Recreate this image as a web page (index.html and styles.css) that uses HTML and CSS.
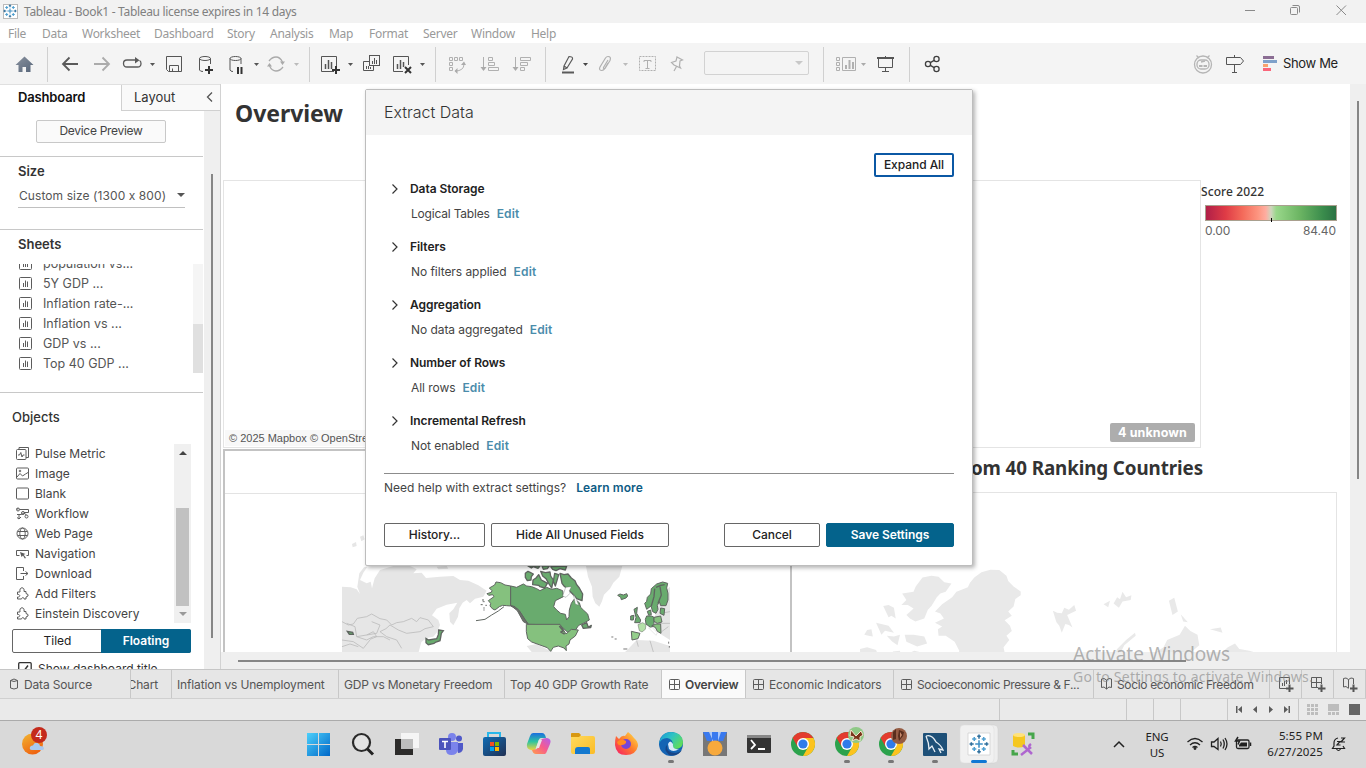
FILE: index.html
```html
<!DOCTYPE html>
<html lang="en">
<head>
<meta charset="utf-8">
<title>Tableau - Book1</title>
<link rel="stylesheet" href="styles.css">
</head>
<body>
<svg class="defs" width="0" height="0">
  <defs>
    <linearGradient id="home" x1="0" y1="0" x2="1" y2="1"><stop offset="0" stop-color="#8a929e"/><stop offset="1" stop-color="#56657a"/></linearGradient>
    <linearGradient id="win" x1="0" y1="0" x2="1" y2="1"><stop offset="0" stop-color="#4cd0fb"/><stop offset="1" stop-color="#0067c8"/></linearGradient>
    <linearGradient id="edge" x1="0" y1="0" x2="1" y2=".6"><stop offset="0" stop-color="#1593d8"/><stop offset=".5" stop-color="#2fc3c4"/><stop offset="1" stop-color="#5fdc5c"/></linearGradient>
    <linearGradient id="folder" x1="0" y1="0" x2="1" y2="1"><stop offset="0" stop-color="#ffdc62"/><stop offset="1" stop-color="#fbbc26"/></linearGradient>
    <linearGradient id="fox" x1="0" y1="1" x2="1" y2="0"><stop offset="0" stop-color="#f5156c"/><stop offset=".5" stop-color="#ff7a2c"/><stop offset="1" stop-color="#ffe94a"/></linearGradient>
    <linearGradient id="sun" x1="0" y1="0" x2=".5" y2="1"><stop offset="0" stop-color="#f2b632"/><stop offset="1" stop-color="#ef6511"/></linearGradient>
    <linearGradient id="store" x1="0" y1="0" x2="1" y2="1"><stop offset="0" stop-color="#0f6cb4"/><stop offset="1" stop-color="#213053"/></linearGradient>
    <linearGradient id="cop1" x1="0" y1="0" x2="0" y2="1"><stop offset="0" stop-color="#1b6fe0"/><stop offset=".5" stop-color="#2ec4a0"/><stop offset="1" stop-color="#f0d43c"/></linearGradient>
    <linearGradient id="cop2" x1="1" y1="0" x2="0" y2="1"><stop offset="0" stop-color="#b25df0"/><stop offset=".5" stop-color="#f75c8c"/><stop offset="1" stop-color="#ff9d4c"/></linearGradient>
    <g id="sheet"><rect x=".5" y=".5" width="12" height="12" rx="1" fill="none" stroke="#5c5c5c"/><path d="M4.500 10V6M6.500 10V3.500M8.500 10V4.500" stroke="#5c5c5c" fill="none"/></g>
    <g id="grid" fill="none" stroke="#5c5c5c"><rect x=".5" y=".5" width="10" height="10" rx="1"/><path d="M5.500 0V11M0 5.500H11"/></g>
    <g id="book" fill="none" stroke="#5c5c5c"><path d="M.5 1 L3 .5 L5.500 2 L8 .5 L10.500 1 V9.500 L8 9 L5.500 11 L3 9 L.5 9.500ZM5.500 2V11"/></g>
    <g id="tableau" fill="none" stroke-width="1.300"><path d="M0-3.200V3.200M-3.200 0H3.200" stroke="#3f8fc4"/><path d="M0-8V-4.500M-1.500-6.500H1.500M0 8V4.500M-1.500 6.500H1.500M-8 0H-4.500M-6.500-1.500V1.500M8 0H4.500M6.500-1.500V1.500" stroke="#2f6f9c"/><path d="M-4-6V-2.500M-5.800-4.200H-2.300M4-6V-2.500M5.800-4.200H2.300M-4 6V2.500M-5.800 4.200H-2.300M4 6V2.500M5.800 4.200H2.300" stroke="#4f9fd0"/></g>
    <g id="chrome"><circle r="12" fill="#2ba24c"/><path d="M-10.400-6A12 12 0 0 1 10.400-6H0L-5.200 3Z" fill="#e33b2e"/><path d="M10.400-6A12 12 0 0 1 0 12L5.200 3L0-6Z" fill="#fcc31e"/><circle r="6" fill="#fff"/><circle r="4.600" fill="#2f7bea"/></g>
    <g id="puzzle" fill="none" stroke="#5c5c5c"><path d="M1.500 5H4C3.500 2 4.500 .8 6 .8S8.500 2 8 4.500H10V6.500L12 7.500V9L10 10V12H8C8 10 6 10 5.500 12H1.500V10C4.500 10.500 4.500 7 1.500 7.500Z"/></g>
  </defs>
</svg>
<div class="app">
  <header class="titlebar">
    <svg width="20" height="23" viewBox="0 0 20 23"><rect x="3.500" y="4.500" width="14" height="14" fill="#fff" stroke="#bbb"/><use href="#tableau" transform="translate(10 11) scale(.82)"/></svg>
    <span class="title-text">Tableau - Book1 - Tableau license expires in 14 days</span>
    <svg class="winctl" width="130" height="23" viewBox="1236 0 130 23" fill="none" stroke="#8a8a8a"><path d="M1245 10.500h10"/><rect x="1290.500" y="7.500" width="7" height="7" rx="1"/><path d="M1292.500 5.500h5.500q1.500 0 1.500 1.500v5.500M1336.500 5.500l9.500 9.500M1346 5.500l-9.500 9.500"/></svg>
  </header>
  <nav class="menubar"><span class="m-file">File</span><span class="m-data">Data</span><span class="m-work">Worksheet</span><span class="m-dash">Dashboard</span><span class="m-story">Story</span><span class="m-ana">Analysis</span><span class="m-map">Map</span><span class="m-form">Format</span><span class="m-serv">Server</span><span class="m-win">Window</span><span>Help</span></nav>

  <div class="toolbar">
    <div class="group">
      <svg width="47" height="41" viewBox="0 43 47 41"><path d="M24.500 56.500L15.500 65H18.500V72H22.500V67H26V72H30.500V65H33.500Z" fill="url(#home)"/></svg>
    </div>
    <div class="group">
      <svg width="38" height="41" viewBox="48 43 38 41" fill="none" stroke="#5a5a5a" stroke-width="1.800"><path d="M78 64H63M69.500 57.500L63 64L69.500 70.500"/></svg>
      <svg width="31" height="41" viewBox="86 43 31 41" fill="none" stroke="#ababab" stroke-width="1.800"><path d="M94 64H109M102.500 57.500L109 64L102.500 70.500"/></svg>
      <svg width="43" height="41" viewBox="117 43 43 41" fill="none" stroke="#5a5a5a" stroke-width="1.300"><path d="M136 60H127Q123.500 60 123.500 63.500T127 67H137.500Q141 67 141 63.500Q141 61 139.500 60.500"/><path d="M135 57V63.500L139.500 60.200Z" fill="#5a5a5a" stroke="none"/><path d="M150 63H155L152.500 66Z" fill="#555" stroke="none"/></svg>
      <svg width="31" height="41" viewBox="160 43 31 41" fill="none" stroke="#555"><path d="M166.500 56.500H181.500V71.500H168.500L166.500 69.500ZM169.500 71V65.500H178.500V71M172.500 71V68.500"/></svg>
      <svg width="32" height="41" viewBox="191 43 32 41" fill="none" stroke="#555"><ellipse cx="205" cy="58.500" rx="5.500" ry="2"/><path d="M199.500 58.500V70Q200 71.500 203 71.500M210.500 58.500V64"/><path d="M209 66V74M205 70H213" stroke="#333" stroke-width="2"/></svg>
      <svg width="39" height="41" viewBox="223 43 39 41" fill="none" stroke="#555"><ellipse cx="235.500" cy="58.500" rx="5.500" ry="2"/><path d="M230 58.500V70Q230.500 71.500 233 71.500M241 58.500V64"/><path d="M238 67V74M241.500 67V74" stroke="#333" stroke-width="2"/><path d="M254 63H259L256.500 66Z" fill="#555" stroke="none"/></svg>
      <svg width="47" height="41" viewBox="262 43 47 41" fill="none" stroke="#aaa" stroke-width="1.300"><path d="M269 61Q272 57 276 57T282.500 62M283 67Q280 71 276 71T269.500 66"/><path d="M280 61.500H285L282.500 65ZM267 66.500H272L269.500 63Z" fill="#aaa" stroke="none"/><path d="M294 63H299L296.500 66Z" fill="#bbb" stroke="none"/></svg>
    </div>
    <div class="group">
      <svg width="47" height="41" viewBox="310 43 47 41" fill="none" stroke="#555"><path d="M334 71.500H321.500V56.500H336.500V67"/><path d="M325.500 69V64M328.500 69V60M331.500 69V62" stroke-width="1.500"/><path d="M336 66V74M332 70H340" stroke="#333" stroke-width="2"/><path d="M348 63H353L350.500 66Z" fill="#555" stroke="none"/></svg>
      <svg width="31" height="41" viewBox="357 43 31 41" fill="none" stroke="#555"><rect x="369.500" y="55.500" width="10" height="10"/><path d="M369 61.500H363.500V70.500H373.500V66M372.500 64V61M374.500 64V58M376.500 64V60M366.500 69V66M368.500 69V66M370.500 69V67"/></svg>
      <svg width="47" height="41" viewBox="388 43 47 41" fill="none" stroke="#555"><path d="M403 71.500H393.500V56.500H408.500V65"/><path d="M397.500 69V64M400.500 69V60M403.500 67V62" stroke-width="1.500"/><path d="M405 67L411 73M411 67L405 73" stroke="#333" stroke-width="2"/><path d="M420 63H425L422.500 66Z" fill="#555" stroke="none"/></svg>
    </div>
    <div class="group">
      <svg width="38" height="41" viewBox="436 43 38 41" fill="none" stroke="#b0b0b0"><path d="M449.500 57.500h3v3h-3ZM454.500 57.500h3v3h-3ZM459.500 57.500h3v3h-3ZM449.500 62.500h3v3h-3ZM449.500 67.500h3v3h-3ZM464 64Q464 71 455 71"/><path d="M461 65L464 61.500L466 65ZM457.500 68L454.500 71L457.500 74Z" fill="#aaa" stroke="none"/></svg>
      <svg width="34" height="41" viewBox="474 43 34 41" fill="none" stroke="#b0b0b0"><path d="M483.500 57V70M488.500 57.500h4v3h-4ZM488.500 62.500h6v3h-6ZM488.500 67.500h10v3h-10Z"/><path d="M480.500 67H486.500L483.500 71Z" fill="#aaa" stroke="none"/></svg>
      <svg width="37" height="41" viewBox="508 43 37 41" fill="none" stroke="#b0b0b0"><path d="M515.500 57V70M520.500 57.500h10v3h-10ZM520.500 62.500h7v3h-7ZM520.500 67.500h4v3h-4Z"/><path d="M512.500 67H518.500L515.500 71Z" fill="#aaa" stroke="none"/></svg>
    </div>
    <div class="group">
      <svg width="46" height="41" viewBox="546 43 46 41" fill="none" stroke="#5a5a5a" stroke-width="1.200"><path d="M564 66L569 56.500Q573 56.500 572.500 59L567 68ZM564 66L563.500 69.500L567 68"/><path d="M562 72.500H574" stroke-width="2"/><path d="M583 63H588L585.500 66Z" fill="#444" stroke="none"/></svg>
      <svg width="42" height="41" viewBox="592 43 42 41" fill="none" stroke="#b0b0b0" stroke-width="1.200"><path d="M608 60L603.500 67.500Q603 69 605 68.500L610 60.500Q611.500 56.500 608 56.500Q606.500 56.500 605.500 58L600 67Q598.500 70 601.500 70.500Q603 70.500 604.500 69L608 63"/><path d="M623 63H628L625.500 66Z" fill="#bbb" stroke="none"/></svg>
      <svg width="31" height="41" viewBox="634 43 31 41" fill="none" stroke="#b0b0b0"><rect x="639.500" y="56.500" width="16" height="14" stroke-dasharray="2 1"/><path d="M644 62V60.500H651V62M647.500 60.500V68M645.500 68.500H649.500"/></svg>
      <svg width="34" height="41" viewBox="665 43 34 41" fill="none" stroke="#b0b0b0" stroke-width="1.200"><path d="M677 57L682.500 60L680 61L679.500 66L680.500 68L674 65L671.500 62.500L676 61ZM676.500 66.500L674 71"/></svg>
      <span class="combo"></span>
      <i class="spacer-combo"></i>
    </div>
    <div class="group">
      <svg width="49" height="41" viewBox="824 43 49 41" fill="none" stroke="#b0b0b0"><path d="M836.500 57.500h3v3h-3ZM836.500 62.500h3v3h-3ZM836.500 67.500h3v3h-3ZM842.500 57.500h13v13h-13Z"/><path d="M846 69V65M849.500 69V60M853 69V62" stroke-width="2"/><path d="M861 63H866L863.500 66Z" fill="#aaa" stroke="none"/></svg>
      <svg width="36" height="41" viewBox="873 43 36 41" fill="none" stroke="#555"><path d="M878.500 58V67.500H892.500V58M885.500 56V58M885.500 67V71M882 71.500H889"/><path d="M877 58H894" stroke-width="2"/></svg>
    </div>
    <div class="group last">
      <svg width="40" height="41" viewBox="910 43 40 41" fill="none" stroke="#3f3f3f" stroke-width="1.300"><circle cx="928" cy="64" r="2.600"/><circle cx="936.500" cy="59" r="2.600"/><circle cx="936.500" cy="69" r="2.600"/><path d="M930.300 62.600L934.200 60.400M930.300 65.400L934.200 67.600"/></svg>
    </div>
    <div class="toolbar-right">
      <svg width="32" height="41" viewBox="1188 43 32 41" fill="none" stroke="#b5b5b5" stroke-width="1.300"><circle cx="1203" cy="64.500" r="8.500"/><rect x="1197" y="60" width="12" height="9" rx="4"/><path d="M1196.500 55.500L1199 58M1209.500 55.500L1207 58M1201 62L1205 61"/><path d="M1199 66H1202.500M1203.500 66H1207" stroke-width="2"/></svg>
      <svg width="36" height="41" viewBox="1220 43 36 41" fill="none" stroke="#555"><path d="M1226.500 57.500H1240.500L1243.500 61L1240.500 64.500H1226.500ZM1234.500 55V57M1234.500 65V72M1232 72.500H1237"/></svg>
      <svg width="27" height="41" viewBox="1256 43 27 41"><path d="M1263 56h11v3h-11z" fill="#8b6d93"/><path d="M1263 60h14v3h-14z" fill="#7fa1ca"/><path d="M1263 64h5v3h-5z" fill="#f8a26d"/><path d="M1263 68h8v3h-8z" fill="#fa667a"/></svg>
      <span class="showme">Show Me</span>
    </div>
  </div>

  <main class="workspace">
    <aside class="side">
      <div class="side-tabs"><span class="side-tab on">Dashboard</span><span class="side-tab">Layout</span><svg class="collapse" width="10" height="12" viewBox="0 0 10 12"><path d="M7 1.500L2.500 6L7 10.500" fill="none" stroke="#555" stroke-width="1.300"/></svg></div>
      <div class="side-body">
        <div class="side-content">
          <div class="device"><span class="device-btn">Device Preview</span></div>
          <section class="size">
            <h3>Size</h3>
            <div class="select"><span>Custom size (1300 x 800)</span><i class="caret"></i></div>
          </section>
          <section class="sheets">
            <h3>Sheets</h3>
            <div class="sheet-list">
              <ul>
                <li><svg width="13" height="13"><use href="#sheet"/></svg>population vs...</li>
                <li><svg width="13" height="13"><use href="#sheet"/></svg>5Y GDP ...</li>
                <li><svg width="13" height="13"><use href="#sheet"/></svg>Inflation rate-...</li>
                <li><svg width="13" height="13"><use href="#sheet"/></svg>Inflation vs ...</li>
                <li><svg width="13" height="13"><use href="#sheet"/></svg>GDP vs ...</li>
                <li><svg width="13" height="13"><use href="#sheet"/></svg>Top 40 GDP ...</li>
              </ul>
              <div class="mini-scroll"><i></i></div>
            </div>
          </section>
          <section class="objects">
            <h3>Objects</h3>
            <div class="object-list">
              <ul>
                <li><svg width="13" height="13" fill="none" stroke="#5c5c5c"><rect x=".5" y="2.500" width="9.500" height="10" rx="1"/><path d="M3 2.500V.5H12.500V10.500H10M2 8H3.500L4.800 5.500L6 10L7 8H8.500"/></svg><span>Pulse Metric</span></li>
                <li><svg width="13" height="13" fill="none" stroke="#5c5c5c"><rect x=".5" y="1" width="12" height="11" rx="1"/><path d="M1 10L4 6.500L6.500 9L9.500 7L12 5.500"/><circle cx="4" cy="4" r=".8"/></svg><span>Image</span></li>
                <li><svg width="13" height="13" fill="none" stroke="#5c5c5c"><rect x=".5" y="1" width="12" height="11" rx="1"/></svg><span>Blank</span></li>
                <li><svg width="13" height="13" fill="none" stroke="#5c5c5c"><path d="M3.500 2.500H12.500V5.500H8M.5 2H2.500M1 7.500H5.500L8 6L10.500 8M3 7V12M1 10.500L3 12L5 10"/><circle cx="2" cy="2.500" r="1.500"/><circle cx="10.500" cy="9.500" r="1.500"/><circle cx="7" cy="6" r="1.500"/></svg><span>Workflow</span></li>
                <li><svg width="13" height="13" fill="none" stroke="#5c5c5c"><circle cx="6.500" cy="6.500" r="5.500"/><ellipse cx="6.500" cy="6.500" rx="2.700" ry="5.500"/><path d="M1.500 4.500H11.500M1.500 8.500H11.500"/></svg><span>Web Page</span></li>
                <li><svg width="13" height="13" fill="none" stroke="#5c5c5c"><path d="M3.500 8.500H.5V3.500H12.500V8.500H10.500"/><path d="M4 5L9.500 7L7.700 7.800L10 11L8.800 11.500L7 8.500L5.500 10Z" fill="#5c5c5c" stroke="none"/></svg><span>Navigation</span></li>
                <li><svg width="13" height="13" fill="none" stroke="#5c5c5c"><path d="M7.500 4V.5H.5V12.500H7.500V9M4.500 6.500H12M9.500 4.500L12 6.500L9.500 8.500"/></svg><span>Download</span></li>
                <li><svg width="13" height="13"><use href="#puzzle"/></svg><span>Add Filters</span></li>
                <li><svg width="13" height="13"><use href="#puzzle"/></svg><span>Einstein Discovery</span></li>
              </ul>
              <div class="obj-scroll"><i class="up"></i><i class="thumb"></i><i class="down"></i></div>
            </div>
            <div class="toggle"><span>Tiled</span><span class="on">Floating</span></div>
            <div class="check"><svg width="14" height="14" fill="none" stroke="#333"><rect x=".7" y=".7" width="12.500" height="12.500" rx="1" stroke-width="1.300"/><path d="M3.500 7.500L5.500 9.500L10 3.500" stroke-width="1.500"/></svg><span>Show dashboard title</span></div>
          </section>
        </div>
        <div class="side-scroll"><i></i></div>
      </div>
    </aside>

    <div class="stage">
      <div class="stage-row">
        <div class="canvas">
          <h1 class="dash-title">Overview</h1>
          <div class="zone zone-top"><span class="attrib">© 2025 Mapbox © OpenStreetMap</span><span class="unknown">4 unknown</span></div>
          <div class="legend"><div class="legend-title">Score 2022</div><div class="legend-bar"></div><div class="legend-range"><span>0.00</span><span>84.40</span></div></div>
          <div class="zone zone-left"><div class="zone-head"></div></div>
          <div class="zone zone-right"><h2>Bottom 40 Ranking Countries</h2></div>
          <svg class="map" width="1128" height="160" viewBox="221 492 1128 160">
            <g transform="translate(220 440) scale(.33333)">
              <g fill="#e6e6e6">
                <path d="M366 440L392 442 410 448 420 462 412 440 418 400 432 382 442 380 430 398 420 420 440 430 452 425 456 445 464 415 480 390 500 384 520 378H570L590 388 580 400 605 398 618 414 660 410 700 408 720 420 745 422 775 436 800 452 790 470 765 476 750 490 740 480 728 488 718 505 714 530 700 556 690 545 688 520 700 508 712 488 680 494 650 506 636 526 655 540 660 555 652 575 640 590 620 594 604 606 596 636H366Z"/>
                <path d="M396 312L408 306 410 318 398 322ZM420 290L430 286 434 298 424 304ZM1098 378H1207L1198 410 1180 428 1170 446 1152 464 1146 484 1138 500 1126 490 1118 470 1116 440 1104 410ZM650 380L680 378 685 386 655 388ZM935 636L920 618 950 612 985 630 1000 636Z"/>
                <path d="M1310 500L1330 460 1350 440V600L1318 580 1300 560ZM1222 630L1250 600 1300 602 1350 618V636H1215Z"/>
              </g>
              <path d="M366 545L385 555 400 552 412 535 440 530 455 522 480 536 500 540 515 555 530 548 550 545 575 535 590 545 600 533 625 540 640 560 615 566 600 575 560 580 535 570 510 555 498 566 480 575 500 590 530 600 545 625M455 545L480 555 470 580 440 585 410 590 405 560 380 550M410 590L440 600 460 590 490 590 510 600M440 585L460 575 470 590 450 598M366 600L400 605 430 625 450 600M366 620L390 612 415 620M1290 602L1300 636M1250 602L1255 620M1320 520L1350 515M1318 550H1350M1325 575L1345 560" fill="none" stroke="#bcbcbc" stroke-width="2.500"/>
              <g fill="#69ab6e" stroke="#5f6560" stroke-width="4"><path d="M656 570L670 572 664 580 662 592 660 602 648 606 642 610 625 614 618 608 618 595 626 600 650 596 655 584Z"/><path d="M382 574L398 577 400 583 388 583Z"/></g>
              <path d="M790 510h4M788 485h6M796 496h5M1174 591h6M1184 597h6M1210 627h12M1346 605v6M1348 618v5" fill="none" stroke="#777" stroke-width="3"/>
            </g>
            <g transform="translate(460 560) scale(.33333)" stroke="#5f6560" stroke-width="3" stroke-linejoin="round">
              <path d="M152 78L135 75 122 68 108 66 104 75 88 84 96 92 94 97 81 101 86 106 98 104 102 110 85 122 92 130 90 138 98 147 105 150 118 140 128 136 140 137 152 138Z" fill="#85c17e"/>
              <path d="M152 78L170 82 190 72 200 78 215 80 230 86 240 92 260 82 275 88 290 85 308 92 310 110 286 122 281 140 290 150 302 160 316 163 320 180 327 170 328 150 334 130 342 118 350 122 358 128 362 142 370 150 383 162 388 180 370 190 356 196 345 212 322 216 300 195 205 193 195 180 175 148 152 138Z" fill="#69ab6e"/>
              <path d="M152 136L165 140 180 155 195 178 205 193 190 185 172 152Z" fill="#6a7069"/>
              <path d="M199 193H300L318 222 334 208 355 210 346 228 330 240 327 252 318 258 319 272 312 264 295 258 280 262 272 274 262 263 240 255 215 246 203 236 199 215Z" fill="#85c17e"/>
              <path d="M298 198L310 212 303 216 314 222" fill="none" stroke-width="5"/>
              <path d="M196 40L204 34 212 38 220 42 214 50 213 60 202 62 196 52ZM219 60L228 54 236 44 244 60 252 64 262 70 254 84 240 80 236 76 218 74ZM204 18H240L234 25 220 20 214 24ZM246 18H268L262 26 250 28ZM272 20L320 18 316 30 300 26 288 32 278 28ZM300 40L312 44 324 42 334 54 345 62 350 74 358 84 368 102 366 122 350 116 338 102 326 90 312 78 306 70ZM242 34L256 38 270 36 272 48 280 60 275 84 266 70 258 56 248 48ZM284 40L296 44 292 58 286 78 280 64ZM365 195L380 188 385 202 394 196 392 203 370 205Z" fill="#69ab6e" stroke-width="4"/>
              <path d="M317 82L334 80 328 92 330 100 318 112 308 108ZM340 102L350 120 356 136 346 132Z" fill="#fff" stroke-width="1"/>
              <path d="M473 106L480 102 490 105 500 101 503 108 498 114 484 119 482 112Z" fill="#69ab6e"/>
              <path d="M554 130L560 124 562 112 572 102 574 86 590 72 608 66 623 70 620 84 624 100 624 120 618 137 602 137 598 125 592 136 594 148 588 160 578 155 573 138 560 148Z" fill="#69ab6e"/>
              <path d="M600 80L604 105 594 130M584 86L582 110 574 138M588 82L602 76 614 74" fill="none" stroke-width="4"/>
              <path d="M522 148L532 142 530 160 542 180 540 188 524 188 528 172ZM512 168L522 166 520 180 512 180ZM556 178L560 168 575 168 582 172V190L574 204 558 192ZM562 154L572 150 574 164 566 166ZM602 144L614 146 612 166 600 160Z" fill="#69ab6e"/>
              <path d="M582 172L602 168 606 186 592 190 582 184ZM575 198L588 192 602 192 603 220 592 214 586 202Z" fill="#85c17e"/>
              <path d="M566 204L576 202 592 218 588 226 574 212Z" fill="#fff" stroke="#bbb" stroke-width="1"/>
              <path d="M534 194L548 188 558 194 556 208 546 216 538 212Z" fill="#b4e0a8" stroke-width="1.500"/>
              <path d="M514 214L540 220 534 236 516 240Z" fill="#94cf8b"/>
              <path d="M48 182L75 178 95 165 115 153 132 140M66 120h6M62 134h6M70 144h4" fill="none"/>
            </g>
            <g transform="translate(660 440) scale(.35714)" fill="#e9e9e9">
              <path d="M790 460L818 440 830 425 862 412 868 400 880 385 900 370 925 363 950 364 970 380 975 395 990 410 1010 424 1010 435 995 445 990 466 975 480 985 492 965 505 980 520 985 535 970 548 978 560 962 580 966 600 958 616 972 636H838L834 610 838 590 825 565 800 548 780 548 778 530 790 522 770 512 795 500 785 486 770 480Z"/>
              <path d="M735 385L760 380 780 383 796 398 816 402 800 425 785 430 775 440 760 465 750 475 740 500 715 508 700 500 690 490 710 472 694 462 676 462 690 448 678 430 710 425 716 410ZM625 465L640 462 655 470 660 500 648 492 640 496ZM605 512L640 520 655 540 630 534 620 545ZM560 585L580 580 605 588 612 605 590 612 582 636H562ZM572 545L580 532 592 530 596 550 584 548ZM652 592L672 590 675 615 662 625 655 610ZM690 600L712 590 745 598 738 612 760 612 765 636H740L730 620 712 636H690L705 612ZM635 548L655 550 672 545 665 575 650 564ZM685 545L710 545 740 550 748 570 720 578 690 565ZM620 600L640 595 646 612 636 636 622 620Z"/>
              <path d="M1100 478L1112 484 1125 485 1132 470 1145 475 1160 462 1165 478 1140 490 1155 525 1145 518 1135 515 1125 540 1118 520 1110 510ZM1242 460L1260 450 1255 468ZM1270 458L1280 440 1288 446 1295 425 1305 440 1320 435 1318 448 1295 452 1285 470ZM1425 450L1440 442 1450 480 1435 490ZM1458 488L1478 510 1465 508Z"/>
              <path d="M1265 620L1272 600 1280 585 1305 560 1330 540 1332 548 1300 575 1285 605 1292 630ZM1338 605L1352 598 1355 620 1375 625 1370 636H1325ZM1380 600L1410 580 1420 560 1455 545 1470 520 1485 535 1505 545 1510 575 1485 596 1570 598 1590 580 1610 570 1622 585 1650 590 1700 605 1760 600 1800 625V636H1400L1405 612ZM1540 530L1570 525 1575 540ZM425 630H450V636H425Z"/>
            </g>
          </svg>
        </div>
        <div class="vscroll"><i></i></div>
      </div>
      <div class="hscroll"><i></i></div>
    </div>
  </main>

  <nav class="sheet-tabs">
    <span class="t-source"><svg width="10" height="12" fill="none" stroke="#5c5c5c"><path d="M1.500 2.500V10Q5 12 8.500 10V2.500Q5-.5 1.500 2.500Q5 4.500 8.500 2.500"/></svg>Data Source</span>
    <span class="t-chart"><b>Chart</b></span>
    <span class="t-infl">Inflation vs Unemployment</span>
    <span class="t-gdp">GDP vs Monetary Freedom</span>
    <span class="t-top">Top 40 GDP Growth Rate</span>
    <span class="t-over"><svg width="11" height="11"><use href="#grid"/></svg>Overview</span>
    <span class="t-econ"><svg width="11" height="11"><use href="#grid"/></svg>Economic Indicators</span>
    <span class="t-press"><svg width="11" height="11"><use href="#grid"/></svg>Socioeconomic Pressure &amp; F...</span>
    <span class="t-free"><svg width="11" height="12"><use href="#book"/></svg>Socio economic Freedom</span>
    <span class="t-add"><svg width="16" height="16"><path d="M8 11.500H1.500V.5H11.500V7M4.500 9V6M6.500 9V4M8.500 7V3" fill="none" stroke="#5c5c5c"/><path d="M11.500 7.500V15M8 11.500H15.500" stroke="#555" stroke-width="2"/></svg></span>
    <span class="t-add"><svg width="16" height="16"><path d="M8 10.500H1.500V.5H11.500V7M6.500 0V11M1 5.500H12" fill="none" stroke="#5c5c5c"/><path d="M11.500 7.500V15M8 11.500H15.500" stroke="#555" stroke-width="2"/></svg></span>
    <span class="t-add"><svg width="16" height="16"><path d="M6.500 11.500L4 9.500L1.500 10V1.500L4 1L6.500 2.500L9 1L11.500 1.500V7M6.500 2.500V11" fill="none" stroke="#5c5c5c"/><path d="M11.500 7.500V15M8 11.500H15.500" stroke="#555" stroke-width="2"/></svg></span>
  </nav>
  <div class="status"><i class="s1"></i><i class="s2"></i><i class="s3"></i><i class="s3"></i><i class="s4"></i>
    <span class="s5"><svg width="70" height="20" viewBox="1228 699 70 20" fill="#5c5c5c"><path d="M1236 706h1.500v7H1236zM1242 706v7l-4-3.500zM1257 706v7l-4-3.500zM1269 706v7l4-3.500zM1284 706v7l4-3.500zM1288.500 706h1.500v7h-1.500z"/></svg></span>
    <svg width="67" height="20" viewBox="1299 699 67 20"><path d="M1307 704h3v3h-3zM1311 704h3v3h-3zM1315 704h3v3h-3zM1307 708h3v3h-3zM1311 708h3v3h-3zM1315 708h3v3h-3zM1307 712h3v3h-3zM1311 712h3v3h-3zM1315 712h3v3h-3zM1328 704h11v7h-11zM1328 712h3v3h-3zM1332 712h3v3h-3zM1336 712h3v3h-3z" fill="#bdbdbd"/><path d="M1349 704h11v11h-11z" fill="#666"/></svg>
  </div>

  <footer class="taskbar">
    <div class="weather"><svg width="40" height="47" viewBox="14 721 40 47"><circle cx="32.500" cy="744" r="10.500" fill="url(#sun)"/><path d="M32 750Q29 750 30 747Q31 745 33 745.500Q34 742 37.500 743Q40 744 40 746Q44 746 44 748.500Q44 750 42 750Z" fill="#a9c9f0"/><circle cx="39" cy="735" r="8" fill="#c42b1c"/></svg><b>4</b></div>
    <div class="apps">
      <svg viewBox="-22 -23 44 47"><path d="M-11-11H0V0H-11ZM1-11H12V0H1ZM-11 1H0V12H-11ZM1 1H12V12H1Z" fill="url(#win)"/></svg>
      <svg viewBox="-22 -23 44 47"><circle cx="-.5" cy="-1.500" r="8.500" fill="#e3e3e3" stroke="#2a2a2a" stroke-width="2.200"/><path d="M5.500 5L11 10.500" stroke="#222" stroke-width="3"/></svg>
      <svg viewBox="-22 -23 44 47"><path d="M-11-5H7V11H-11Z" fill="#2c2b2a"/><path d="M-5-11H13V4H-5Z" fill="#f5f5f5"/><path d="M-5-5H7V5H-5Z" fill="#bdbdbd"/></svg>
      <svg viewBox="-22 -23 44 47"><circle cx="2" cy="-7" r="4" fill="#7b83eb"/><circle cx="9" cy="-5.500" r="3" fill="#5059c9"/><path d="M6-1H13V5Q12 9 8 9Z" fill="#5059c9"/><path d="M-4-2H8V6Q7 11 1.500 11T-4 6Z" fill="#7b83eb"/><rect x="-11" y="-6" width="12" height="12" rx="1" fill="#4b53bc"/><path d="M-8-2.500H-2M-5-2.500V4" stroke="#fff" stroke-width="1.600"/></svg>
      <svg viewBox="-22 -23 44 47"><path d="M-6-7V-11H6V-7" fill="none" stroke="#27b7ea" stroke-width="2"/><rect x="-11" y="-7" width="23" height="19" rx="2" fill="url(#store)"/><path d="M-4-2H0V2H-4Z" fill="#f25022"/><path d="M1-2H5V2H1Z" fill="#7fba00"/><path d="M-4 3H0V7H-4Z" fill="#00a4ef"/><path d="M1 3H5V7H1Z" fill="#ffb900"/></svg>
      <svg viewBox="-22 -23 44 47"><path d="M-5-11H4Q7-11 8-6H3Q1-6 0-2L-2 4Q-3 7-7 6Q-12 5-11 0L-8-8Q-7-11-5-11Z" fill="url(#cop1)"/><path d="M7 10H-2Q-5 10-6 6L-1 5 2-3Q4-6 9-6Q14-5 12 0L9 7Q8 10 7 10Z" fill="url(#cop2)"/><path d="M1-4H4L1 4H-2Z" fill="#e6e6e6"/></svg>
      <svg viewBox="-22 -23 44 47"><path d="M-11-10Q-11-11-10-11H-3L-1-8H11Q13-8 13-6V8Q13 10 11 10H-9Q-11 10-11 8Z" fill="url(#folder)"/><path d="M-11-7V-10Q-11-11-10-11H-3L-1-9L-3-7Z" fill="#d89811"/><path d="M-7 10V6Q-7 3-4 3H6Q8 3 8 5V10Z" fill="#1479cf"/></svg>
      <svg viewBox="-22 -23 44 47"><path d="M-10-8L-7-5Q-4-9-1-8L2-12Q6-9 8-6Q12-3 12 2Q10 11 0 11Q-10 11-11 1Q-11-5-10-8Z" fill="url(#fox)"/><circle cx="0" cy="0" r="5" fill="#7445d8"/><path d="M-9-2Q-5-6 0-3Q1 0-4 1Q-8 2-9-2" fill="#ff8b22"/></svg>
      <svg viewBox="-22 -23 44 47"><circle cx="1" cy="0" r="12" fill="#1464b4"/><path d="M-11 0Q-9-12 1-12Q12-12 13-2Q13 5 5 5Q2 4 3 1Q3-5-3-6Q-9-6-11 0Z" fill="url(#edge)"/><path d="M-3 1Q-4 9 6 9Q10 8 12 6Q8 13-1 11Q-7 5-3 1Z" fill="#184586"/><path d="M-2 0Q0-5 3 0Q2 6 9 5Q3 9-1 5Z" fill="#d8eafa"/><rect x="-2" y="16" width="6" height="3" rx="1.500" fill="#777"/></svg>
      <svg viewBox="-22 -23 44 47"><path d="M-11-12H13V12H-11Z" fill="#777"/><path d="M-11-12H-5L-1-3H-7ZM13-12H7L3-3H9ZM-2-12H4V-2H-2Z" fill="#3979ef"/><path d="M-5-12H-2V-3H-1ZM4-12H7L4-3Z" fill="#a8c8ff"/><circle cx="1" cy="4" r="7.500" fill="#f7a93c"/></svg>
      <svg viewBox="-22 -23 44 47"><rect x="-11" y="-9" width="24" height="18" rx="1" fill="#343434"/><path d="M-11-9H13V-6H-11Z" fill="#888"/><path d="M-7-4L-3 1L-7 5M0 5H7" fill="none" stroke="#fff" stroke-width="1.800"/></svg>
      <svg viewBox="-22 -23 44 47"><use href="#chrome" x="1"/></svg>
      <svg viewBox="-22 -23 44 47"><use href="#chrome" x="1"/><circle cx="10" cy="-9" r="8" fill="#8fc987"/><path d="M10-8L5-14 4-8 8-7 6-3 10-5 14-3 14-7 17-9 15-13Z" fill="#7a351a" stroke="#f4e4d0"/><rect x="-2" y="16" width="6" height="3" rx="1.500" fill="#777"/></svg>
      <svg viewBox="-22 -23 44 47"><use href="#chrome" x="1"/><circle cx="9" cy="-8" r="8" fill="#955c43"/><path d="M3-12L6-15 6-5 3-4ZM9-14L14-12 13-8 9-3 8-8Z" fill="#5a2e1d"/><path d="M10-12L12-9 10-6Z" fill="#c88b6e"/><rect x="-2" y="16" width="6" height="3" rx="1.500" fill="#777"/></svg>
      <svg viewBox="-22 -23 44 47"><rect x="-11" y="-11" width="24" height="23" rx="1" fill="#1e5078"/><path d="M-8-8Q-2-10 2-2Q7 1 9 6L5 5L7 9M-8-8Q-5-1-5 5L-2 2L1 8" fill="none" stroke="#e9f0f5" stroke-width="1.300"/><rect x="-2" y="16" width="6" height="3" rx="1.500" fill="#777"/></svg>
      <svg viewBox="-22 -23 44 47"><rect x="-14" y="-19" width="34" height="38" rx="4" fill="#eee" stroke="#ccc" stroke-width=".5"/><rect x="-18" y="-19" width="34" height="38" rx="4" fill="#f1f1f1" stroke="#ddd" stroke-width=".5"/><path d="M-10-11H12V11H-10Z" fill="#fff" stroke="#ccc" stroke-width=".7"/><use href="#tableau" transform="translate(1 0) scale(1.180)"/><rect x="-7" y="16" width="16" height="3" rx="1.500" fill="#0f78d4"/></svg>
      <svg viewBox="-22 -23 44 47"><path d="M-9-9V2Q-3 5 3 2V-9Z" fill="#f5c721"/><ellipse cx="-3" cy="-9" rx="6" ry="2" fill="#ffe27a"/><path d="M6-10H11V-5M-9 6V10H-4" fill="none" stroke="#46a64b" stroke-width="3"/><path d="M1 1L10 10M9 0Q6 2 8 4L-1 11" fill="none" stroke="#ae66cf" stroke-width="2.500"/></svg>
    </div>
    <div class="tray">
      <svg width="30" height="47" viewBox="1104 721 30 47"><path d="M1114 747L1119 742L1124 747" fill="none" stroke="#222" stroke-width="1.500"/></svg>
      <div class="lang">ENG<br>US</div>
      <svg width="76" height="47" viewBox="1180 721 76 47" fill="none" stroke="#222" stroke-width="1.300"><path d="M1187.500 742Q1195 735 1202.500 742M1190 745Q1195 740.500 1200 745M1192.500 747.500Q1195 745.500 1197.500 747.500"/><circle cx="1195" cy="748.500" r=".8"/><path d="M1211.500 742H1214L1218 738.500V749.500L1214 746.500H1211.500ZM1220.500 741.500Q1222 744 1220.500 746.500M1223 739.500Q1225.500 744 1223 748.500M1225 738Q1229 744 1225 750"/><rect x="1236.500" y="740" width="12.500" height="8.500" rx="1.500"/><path d="M1241 742.500H1247V746.500H1239V745Z" fill="#222" stroke="none"/><path d="M1250.500 742.500V746" stroke-width="1.500"/><path d="M1238 737L1235.500 741H1239.500L1238 744.500" stroke-width="1.500"/></svg>
      <div class="clock">5:55 PM<br>6/27/2025</div>
      <svg width="24" height="47" viewBox="1329 721 24 47" fill="none" stroke="#222" stroke-width="1.200"><path d="M1338 738Q1334 739 1334 743V746L1332.500 748.500H1344.500L1343 746M1336.500 749Q1338.500 752 1340.500 749M1337 741.500H1340L1337 745H1340.500M1341 738H1344.500L1341 742H1345"/></svg>
    </div>
  </footer>
</div>

<div class="dialog">
  <div class="dialog-head">Extract Data</div>
  <div class="dialog-body">
    <span class="btn expand">Expand All</span>
    <div class="opts">
      <div class="opt"><svg width="8" height="12"><path d="M1.500 1.500L6 6L1.500 10.500" fill="none" stroke="#333" stroke-width="1.200"/></svg><b>Data Storage</b><p class="tight">Logical Tables<a>Edit</a></p></div>
      <div class="opt"><svg width="8" height="12"><path d="M1.500 1.500L6 6L1.500 10.500" fill="none" stroke="#333" stroke-width="1.200"/></svg><b>Filters</b><p>No filters applied<a>Edit</a></p></div>
      <div class="opt"><svg width="8" height="12"><path d="M1.500 1.500L6 6L1.500 10.500" fill="none" stroke="#333" stroke-width="1.200"/></svg><b>Aggregation</b><p>No data aggregated<a>Edit</a></p></div>
      <div class="opt"><svg width="8" height="12"><path d="M1.500 1.500L6 6L1.500 10.500" fill="none" stroke="#333" stroke-width="1.200"/></svg><b>Number of Rows</b><p>All rows<a>Edit</a></p></div>
      <div class="opt"><svg width="8" height="12"><path d="M1.500 1.500L6 6L1.500 10.500" fill="none" stroke="#333" stroke-width="1.200"/></svg><b>Incremental Refresh</b><p>Not enabled<a>Edit</a></p></div>
    </div>
    <div class="help">Need help with extract settings?<a>Learn more</a></div>
    <div class="actions"><span class="btn b-hist">History...</span><span class="btn b-hide">Hide All Unused Fields</span><span class="btn b-cancel">Cancel</span><span class="btn b-save">Save Settings</span></div>
  </div>
</div>
<div class="watermark"><div class="wm1">Activate Windows</div><div class="wm2">Go to Settings to activate Windows.</div></div>
</body>
</html>
```
FILE: styles.css
```css
* { box-sizing: border-box; }
body { margin: 0; width: 1366px; height: 768px; overflow: hidden; position: relative; font-family: Inter, "Open Sans", sans-serif; font-size: 12px; color: #333; }
h1, h2, h3, p, ul { margin: 0; padding: 0; }
ul { list-style: none; }
svg { display: block; flex: none; }
.defs { position: absolute; }
.app { display: flex; flex-direction: column; height: 768px; }

.titlebar { height: 23px; background: #f2f2f2; display: flex; align-items: center; font-family: "Noto Sans", sans-serif; font-size: 12px; color: #808080; }
.title-text { margin-left: 4px; letter-spacing: -.31px; white-space: nowrap; line-height: 16px; padding-top: 1px; }
.winctl { margin-left: auto; }
.menubar { height: 20px; background: #fff; display: flex; padding-left: 8px; font: 12px/22px "Noto Sans", sans-serif; color: #999; letter-spacing: -.28px; white-space: nowrap; }
.m-file { width: 34px; }
.m-data { width: 40px; }
.m-work { width: 72px; }
.m-dash { width: 73px; }
.m-story { width: 43px; }
.m-ana { width: 59px; }
.m-map { width: 40px; }
.m-form { width: 54px; }
.m-serv { width: 48px; }
.m-win { width: 60px; }

.toolbar { height: 41px; background: #f4f4f4; display: flex; }
.group { display: flex; position: relative; }
.group:not(.last)::after { content: ""; width: 1px; height: 35px; margin-top: 4px; background: #d0d0d0; }
.combo { width: 105px; height: 24px; margin: 8px 0 0 5px; border: 1px solid #d2d2d2; border-radius: 2px; display: flex; align-items: center; justify-content: flex-end; padding-right: 5px; }
.combo::after { content: ""; border: 4px solid transparent; border-top-color: #c8c8c8; border-bottom: 0; }
.spacer-combo { width: 14px; }
.toolbar-right { margin-left: auto; width: 178px; display: flex; }
.showme { font-size: 13px; line-height: 41px; color: #222; letter-spacing: -.35px; white-space: nowrap; }

.workspace { height: 585px; display: flex; }
.side { width: 221px; border-right: 1px solid #d2d2d2; display: flex; flex-direction: column; }
.side-tabs { height: 27px; display: flex; position: relative; border-top: 1px solid #e0e0e0; font-size: 13px; line-height: 25px; color: #333; }
.side-tab { width: 99px; padding-left: 12px; background: #f9f9f9; border-left: 1px solid #d0d0d0; border-bottom: 1px solid #d0d0d0; }
.side-tab.on { width: 121px; padding-left: 18px; border: 0; background: #fff; color: #111; font-weight: 600; letter-spacing: -.15px; }
.collapse { position: absolute; right: 5px; top: 6px; }
.side-body { height: 558px; display: flex; overflow: hidden; }
.side-content { width: 203px; height: 558px; overflow: hidden; margin-right: 1px; }
.side-scroll { width: 16px; background: #efefef; padding: 63px 0 0 7px; }
.side-scroll i { display: block; width: 2px; height: 464px; background: #868686; }
.side h3 { font-size: 13px; line-height: 18px; font-weight: 600; color: #333; }
.device { height: 45px; padding: 9px 0 0 36px; }
.device-btn { display: block; width: 130px; height: 23px; border: 1px solid #c8c8c8; border-radius: 2px; background: #fafafa; text-align: center; line-height: 20px; font-size: 12px; color: #444; letter-spacing: -.3px; }
.size { height: 74px; border-top: 1px solid #c8c8c8; border-bottom: 1px solid #c8c8c8; padding: 5px 18px 0; }
.select { width: 167px; height: 28px; border-bottom: 1px solid #c0c0c0; display: flex; align-items: center; justify-content: space-between; padding-top: 3px; color: #555; font-size: 12px; letter-spacing: .08px; padding-left: 1px; }
.caret { border: 4px solid transparent; border-top-color: #555; border-bottom: 0; }
.sheets { height: 163px; padding: 5px 0 0 18px; border-bottom: 1px solid #c8c8c8; }
.sheet-list { display: flex; justify-content: space-between; height: 109px; margin-top: 11px; overflow: hidden; }
.sheet-list ul { margin-top: -11px; }
.sheet-list li { height: 20px; display: flex; align-items: center; gap: 11px; font-size: 12.5px; color: #555; white-space: nowrap; padding-left: 1px; }
.mini-scroll { width: 10px; height: 109px; background: #f5f5f5; padding-top: 60px; }
.mini-scroll i { display: block; height: 49px; background: #e0e0e0; }
.objects { padding: 15px 0 0 12px; }
.objects h3 { font-weight: 500; font-size: 13px; }
.object-list { display: flex; justify-content: space-between; width: 179px; height: 180px; margin-top: 18px; }
.object-list ul { margin-top: -1px; }
.object-list li { height: 20px; display: flex; align-items: center; gap: 6px; padding-left: 4px; font-size: 12px; color: #444; white-space: nowrap; }
.obj-scroll { width: 17px; height: 179px; background: #f0f0f0; display: flex; flex-direction: column; align-items: center; }
.up { margin-top: 7px; border: 4px solid transparent; border-bottom-color: #444; border-top: 0; }
.thumb { width: 13px; height: 98px; margin-top: 53px; background: #c1c1c1; }
.down { margin-top: 6px; border: 4px solid transparent; border-top-color: #999; border-bottom: 0; }
.toggle { width: 179px; height: 24px; margin-top: 5px; border: 1px solid #666; border-radius: 2px; display: flex; text-align: center; line-height: 22px; font-size: 12px; color: #222; }
.toggle span { width: 89px; }
.toggle .on { width: 90px; background: #04638c; color: #fff; font-weight: 600; margin: -1px; line-height: 24px; border-radius: 0 2px 2px 0; }
.check { display: flex; gap: 6px; margin: 9px 0 0 6px; font-size: 12px; color: #333; line-height: 14px; white-space: nowrap; }

.stage { flex: 1; display: flex; flex-direction: column; min-width: 0; }
.stage-row { height: 568px; display: flex; }
.canvas { position: relative; width: 1129px; overflow: hidden; background: #fff; }
.vscroll { width: 16px; background: #efefef; padding: 17px 0 0 7px; }
.vscroll i { display: block; width: 2px; height: 378px; background: #868686; }
.hscroll { height: 17px; background: #efefef; padding: 8px 0 0 17px; }
.hscroll i { display: block; width: 948px; height: 2px; background: #868686; }
.dash-title { position: absolute; left: 14px; top: 13px; font: bold 23px/32px "Noto Sans", sans-serif; color: #333; letter-spacing: -.05px; }
.zone { position: absolute; }
.zone-top { left: 2px; top: 96px; width: 978px; height: 268px; border: 1px solid #e4e4e4; }
.attrib { position: absolute; left: 1px; bottom: 1px; padding: 0 4px; background: #f8f8f8; font: 11px/16px "Liberation Sans", sans-serif; color: #555; white-space: nowrap; }
.unknown { position: absolute; right: 5px; bottom: 5px; width: 85px; height: 19px; border-radius: 2px; background: #adadad; color: #fff; font: bold 12.5px/19px Inter, sans-serif; text-align: center; letter-spacing: .1px; }
.legend { position: absolute; left: 980px; top: 100px; width: 136px; }
.legend-title { font: 500 12px/16px "Noto Sans", sans-serif; letter-spacing: .1px; color: #333; }
.legend-bar { position: relative; margin: 5px 0 0 4px; width: 132px; height: 16px; border: 1px solid #a9a08f; background: linear-gradient(90deg, #b01f48 0, #df3b46 15%, #f46a5a 28%, #fd9580 40%, #feada0 46%, #cfd5be 50%, #99d78a 54%, #6cb563 72%, #3a8c4c 90%, #2b7243 100%); }
.legend-bar::after { content: ""; position: absolute; left: 65px; bottom: -2px; width: 1px; height: 4px; background: #000; }
.legend-range { display: flex; justify-content: space-between; margin: 3px 1px 0 4px; font-size: 12px; line-height: 14px; color: #666; letter-spacing: -.1px; }
.zone-left { left: 2px; top: 365px; width: 569px; height: 220px; border: 2px solid #c3c3c3; }
.zone-head { height: 43px; border-bottom: 1px solid #e3e3e3; }
.zone-right { left: 571px; top: 366px; width: 545px; height: 220px; border-right: 1px solid #e4e4e4; }
.zone-right::before { content: ""; position: absolute; left: 0; right: -1px; top: 0; height: 42px; background: #fff; border-bottom: 1px solid #e4e4e4; }
.zone-right h2 { position: absolute; right: 133px; top: 4px; font: bold 18.8px/28px "Noto Sans", sans-serif; color: #333; letter-spacing: -.1px; white-space: nowrap; }
.map { position: absolute; left: 0; top: 408px; }

.sheet-tabs { height: 30px; display: flex; border-top: 1px solid #c6c6c6; border-bottom: 1px solid #d0d0d0; background: #e6e6e6; color: #555; font-size: 12px; letter-spacing: -.15px; }
.sheet-tabs > span { display: flex; align-items: center; border-right: 1px solid #c8c8c8; padding-left: 6px; white-space: nowrap; overflow: hidden; }
.sheet-tabs svg { margin-right: 5px; }
.sheet-tabs .t-source { width: 131px; padding-left: 9px; }
.sheet-tabs .t-chart { width: 41px; padding: 0 13px 0 0; justify-content: flex-end; }
.t-chart b { font-weight: 400; }
.sheet-tabs .t-infl { width: 167px; padding-left: 5px; }
.sheet-tabs .t-gdp { width: 166px; padding-left: 5px; letter-spacing: -.2px; }
.sheet-tabs .t-top { width: 157px; padding-left: 5px; }
.sheet-tabs .t-over { width: 84px; padding-left: 7px; background: #fafafa; font-weight: 600; letter-spacing: -.25px; color: #444; }
.sheet-tabs .t-econ { width: 148px; padding-left: 7px; }
.sheet-tabs .t-press { width: 200px; padding-left: 7px; letter-spacing: -.35px; }
.sheet-tabs .t-free { width: 176px; padding-left: 7px; letter-spacing: -.35px; }
.sheet-tabs .t-add { width: 32px; padding-left: 8px; }
.t-add svg { margin: 2px 0 0; }
.status { height: 22px; background: #eaeaea; border-bottom: 1px solid #ababab; display: flex; }
.status > i, .s5 { border-right: 1px solid #c8c8c8; height: 21px; }
.s1 { width: 1000px; }
.s2 { width: 127px; }
.s3 { width: 27px; }
.s4 { width: 47px; }
.s5 { width: 71px; }

.taskbar { height: 47px; background: #d9d9d9; display: flex; }
.weather { position: relative; width: 296px; padding-left: 14px; }
.weather b { position: absolute; left: 31px; top: 6px; width: 16px; text-align: center; color: #fff; font: 12px/16px "Noto Sans", sans-serif; }
.apps { display: flex; width: 748px; }
.apps svg { width: 44px; height: 47px; }
.tray { display: flex; margin-left: 60px; font: 11.5px/16px "Noto Sans", sans-serif; color: #222; letter-spacing: -.1px; }
.lang { width: 46px; padding-top: 8px; text-align: center; }
.clock { width: 73px; padding: 7px 6px 0 0; text-align: right; white-space: nowrap; letter-spacing: .13px; }

.dialog { position: absolute; left: 365px; top: 89px; width: 608px; height: 477px; border: 1px solid #bdbdbd; border-radius: 2px; background: #fff; box-shadow: 2px 2px 4px rgba(0,0,0,.3); }
.dialog-head { height: 45px; background: #f4f4f4; padding-left: 18px; font-size: 16px; line-height: 45px; font-weight: 300; color: #333; letter-spacing: 0; }
.dialog-body { padding: 18px 18px 0; display: flex; flex-direction: column; }
.btn { height: 24px; border: 1px solid #666; border-radius: 2px; background: #fff; text-align: center; line-height: 22px; font-size: 12px; font-weight: 500; letter-spacing: -.05px; color: #222; white-space: nowrap; }
.expand { width: 80px; border: 2px solid #0b58a4; line-height: 20px; align-self: flex-end; }
.opts { height: 297px; padding: 4px 0 0 7px; border-bottom: 1px solid #8c8c8c; }
.opt { display: grid; grid-template-columns: 19px 1fr; height: 58px; grid-template-rows: 16px 18px; row-gap: 8px; align-items: center; color: #222; }
.opt b { font-weight: 600; font-size: 12px; line-height: 16px; letter-spacing: -.05px; }
.opt p { grid-column: 2; font-size: 12px; line-height: 18px; padding-left: 1px; color: #444; letter-spacing: -.06px; }
.opt p.tight { letter-spacing: -.2px; }
.opt a { margin-left: 7px; color: #4a8cab; font-weight: 600; letter-spacing: .15px; }
.help { height: 49px; line-height: 28px; font-size: 12px; color: #444; white-space: nowrap; }
.help a { margin-left: 10px; color: #0e5c85; font-weight: 600; letter-spacing: .08px; }
.actions { display: flex; gap: 6px; }
.b-hist { width: 101px; }
.b-hide { width: 178px; }
.b-cancel { width: 96px; margin-left: auto; }
.btn.b-save { width: 128px; background: #04638c; border-color: #04638c; color: #fff; font-weight: 600; }

.watermark { position: absolute; left: 1073px; top: 641px; color: rgba(130,130,130,.6); font-family: "Noto Sans", sans-serif; white-space: nowrap; }
.wm1 { font-size: 19px; line-height: 26px; letter-spacing: 0; }
.wm2 { font-size: 14px; line-height: 20px; letter-spacing: .23px; }
```
